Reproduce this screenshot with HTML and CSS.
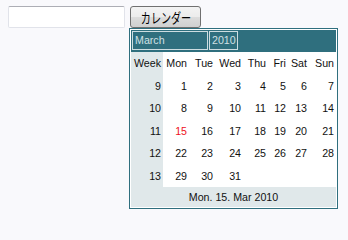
FILE: index.html
```html
<!DOCTYPE html>
<html lang="ja">
<head>
<meta charset="utf-8">
<title>カレンダー</title>
<link rel="stylesheet" href="styles.css">
</head>
<body>
<div class="bar">
  <input class="field" type="text">
  <div class="picker">
    <button class="btn" type="button"><span class="btn-label">カレンダー</span></button>
    <div class="cal">
      <div class="cal-head">
        <div class="sel sel-month">March</div>
        <div class="sel sel-year">2010</div>
      </div>
      <table class="grid">
        <colgroup>
          <col class="c-wk"><col class="c-mon"><col class="c-tue"><col class="c-wed"><col class="c-thu"><col class="c-fri"><col class="c-sat"><col class="c-sun">
        </colgroup>
        <thead>
          <tr><th class="wk">Week</th><th>Mon</th><th>Tue</th><th>Wed</th><th>Thu</th><th>Fri</th><th>Sat</th><th>Sun</th></tr>
        </thead>
        <tbody>
          <tr><td class="wk">9</td><td>1</td><td>2</td><td>3</td><td>4</td><td>5</td><td>6</td><td>7</td></tr>
          <tr><td class="wk">10</td><td>8</td><td>9</td><td>10</td><td>11</td><td>12</td><td>13</td><td>14</td></tr>
          <tr><td class="wk">11</td><td class="today">15</td><td>16</td><td>17</td><td>18</td><td>19</td><td>20</td><td>21</td></tr>
          <tr><td class="wk">12</td><td>22</td><td>23</td><td>24</td><td>25</td><td>26</td><td>27</td><td>28</td></tr>
          <tr><td class="wk">13</td><td>29</td><td>30</td><td>31</td><td></td><td></td><td></td><td></td></tr>
        </tbody>
      </table>
      <div class="cal-foot">Mon. 15. Mar 2010</div>
    </div>
  </div>
</div>
</body>
</html>
```

FILE: styles.css
```css
html, body {
  background: #f9f9fc;
}
body {
  margin: 6px 8px;
  font-family: "Liberation Sans", Arial, sans-serif;
}
.bar {
  display: flex;
  align-items: flex-start;
  gap: 5px;
}
.field {
  box-sizing: border-box;
  width: 117px;
  height: 22px;
  margin: 0;
  padding: 0 3px;
  border: 1px solid #e1e3ea;
  border-top-color: #adaeb5;
  border-radius: 2px;
  background: #fff;
  outline: none;
}
.picker {
  display: flex;
  flex-direction: column;
  align-items: flex-start;
}
.btn {
  box-sizing: border-box;
  display: flex;
  align-items: center;
  justify-content: center;
  width: 71px;
  height: 22px;
  margin: 0;
  padding: 0 0 0 1px;
  border: 1px solid #707070;
  border-radius: 3px;
  background: linear-gradient(#f3f3f3 0%, #ececec 48%, #dcdcdc 52%, #d0d0d0 100%);
  color: #000;
  font-family: "Noto Sans CJK JP", sans-serif;
  font-size: 14px;
  line-height: 18px;
}
.btn-label {
  display: inline-block;
  transform: scaleX(0.72);
  white-space: nowrap;
}
.cal {
  margin-left: -1px;
  width: 205px;
  padding: 1px;
  border: 1px solid #2f6f7e;
  background: #fff;
  font-size: 10.67px;
  color: #111;
}
.cal-head {
  display: flex;
  gap: 1px;
  height: 22px;
  box-sizing: border-box;
  padding: 1px 0 0 1px;
  background: #2f6f7e;
}
.sel {
  box-sizing: border-box;
  height: 19px;
  border: 1px solid #cddde1;
  color: #cfe0e4;
  font-size: 10.67px;
  line-height: 17px;
  padding-left: 2px;
}
.sel-month {
  width: 76px;
}
.sel-year {
  width: 29px;
}
.grid {
  width: 205px;
  table-layout: fixed;
  border-collapse: collapse;
  border-spacing: 0;
}
.c-wk { width: 32px; }
.c-mon { width: 26px; }
.c-tue { width: 26px; }
.c-wed { width: 28px; }
.c-thu { width: 25px; }
.c-fri { width: 20px; }
.c-sat { width: 21px; }
.c-sun { width: 27px; }
.grid th,
.grid td {
  height: 22.5px;
  padding: 0 2px 0 0;
  text-align: right;
  font-weight: normal;
  font-size: 10.67px;
  vertical-align: middle;
  white-space: nowrap;
}
.grid .wk {
  background: #e0e8ea;
}
.grid .today {
  color: #ee1122;
}
.cal-foot {
  height: 20px;
  line-height: 20px;
  text-align: center;
  background: #e0e8ea;
}
```
